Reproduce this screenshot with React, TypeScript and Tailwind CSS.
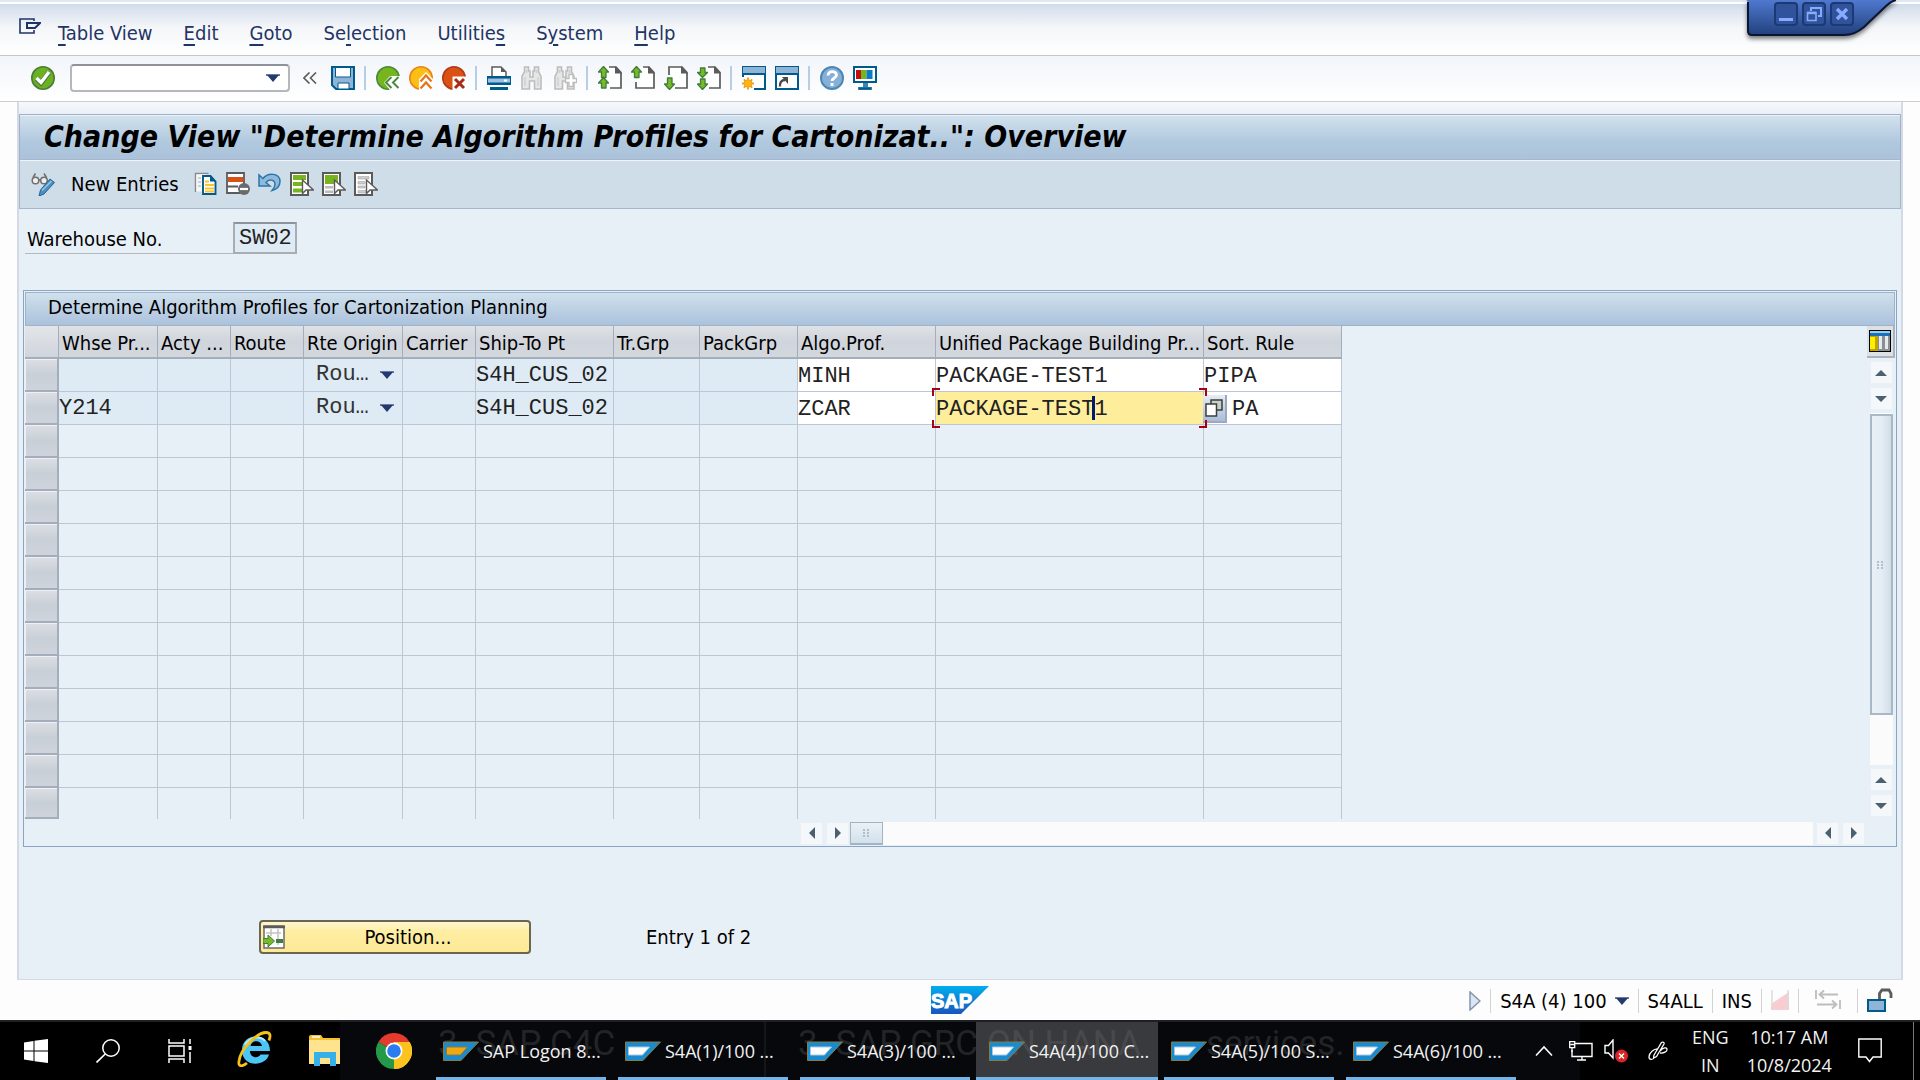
import React from "react";

const UI = "font-['DejaVu_Sans_Condensed','Noto_Sans',sans-serif]";
const MONO = "font-['Liberation_Mono',monospace]";

type IconProps = { children: React.ReactNode; className?: string; box?: string };
const Icon = ({ children, className = "size-6", box = "0 0 24 24" }: IconProps) => (
  <svg viewBox={box} className={`${className} block shrink-0`} fill="none" aria-hidden="true">
    {children}
  </svg>
);

const DownArrow = ({ className = "w-3.5 h-2" }: { className?: string }) => (
  <Icon className={className} box="0 0 14 8">
    <path d="M0 0h14v2H0z" fill="#6b7aa0" />
    <path d="M1 1h12L7 8z" fill="#233a6e" />
  </Icon>
);

/* ---------- toolbar icons ---------- */
const CheckIcon = () => (
  <Icon>
    <circle cx="12" cy="12" r="11.2" fill="#6bb122" stroke="#4a7c3c" strokeWidth="1.6" />
    <path d="M5.5 12.5l4.5 4.5L18 6.5" stroke="#4a7c3c" strokeWidth="5" />
    <path d="M5.5 12l4.5 4.5L18 6" stroke="#fff" strokeWidth="3.4" />
  </Icon>
);
const SaveIcon = () => (
  <Icon>
    <path d="M1 1h22v22H5l-4-4z" fill="#8fb4d8" stroke="#005b8c" strokeWidth="2" />
    <path d="M4.500 1.500h15V11h-15z" fill="#fff" stroke="#005b8c" />
    <path d="M7 17h11v6H7z" fill="#fff" stroke="#005b8c" />
  </Icon>
);
const BackIcon = () => (
  <Icon>
    <circle cx="12" cy="12" r="11.2" fill="#77b51f" stroke="#4b8a3a" strokeWidth="1.6" />
    <path d="M24 10H14l-6 6.500 6 7.500h10z" fill="#fff" />
    <path d="M15.500 11L10 16.500l5.500 5.500M22.500 11L17 16.500l5.500 5.500" stroke="#4b8a3a" strokeWidth="2" />
  </Icon>
);
const ExitIcon = () => (
  <Icon>
    <circle cx="12" cy="12" r="11.2" fill="#fdbf13" stroke="#e8851a" strokeWidth="1.6" />
    <path d="M10 24V13l7-7 7 7v11z" fill="#fff" />
    <path d="M11.500 15.500l5.500-6 5.500 6M11.500 22.500l5.500-6 5.500 6" stroke="#e8741a" strokeWidth="2.2" />
  </Icon>
);
const CancelIcon = () => (
  <Icon>
    <circle cx="12" cy="12" r="11.2" fill="#d95213" stroke="#b03a1a" strokeWidth="1.6" />
    <path d="M10.500 10.500h13.500V24H10.500z" fill="#fff" />
    <path d="M13 13l9 9M22 13l-9 9" stroke="#a92a17" strokeWidth="3" />
  </Icon>
);
const PrintIcon = () => (
  <Icon>
    <path d="M5 10V1h9l5 5v4" fill="#fff" stroke="#5b5b5b" strokeWidth="1.5" />
    <path d="M14 1v5h5z" fill="#5b5b5b" />
    <path d="M0 10h24v9H0z" fill="#005b8c" />
    <path d="M1 12.500h22v4H1z" fill="#9fc0e2" />
    <path d="M17 13.500h3v2h-3z" fill="#fff" />
    <path d="M3 21h18v3H3z" fill="#005b8c" />
  </Icon>
);
const FindIcon = ({ next = false }: { next?: boolean }) => (
  <Icon>
    <path
      d="M4.500 1h4v4h1.500v6h3V5h1.500V1h4v4.500l2.500 5V23h-6.500v-8h-5v8H2V10.500l2.500-5z"
      fill="#e6e6e6"
      stroke="#bdbdbd"
      strokeWidth="1.6"
    />
    <path d="M6.500 4v3M16.500 4v3M5 11v9M18 11v9" stroke="#cfcfcf" strokeWidth="1.5" />
    {next && (
      <path d="M16 8.500h4v4h3.500v4H20v4h-4v-4h-3.500v-4H16z" fill="#fff" stroke="#bdbdbd" strokeWidth="1.3" />
    )}
  </Icon>
);
const upArrow = "M5.500 .500l5 5.500H8v5.500H3.500V6H.5z";
const PageIcon = ({ kind }: { kind: "first" | "prev" | "next" | "last" }) => (
  <Icon>
    <path d="M6 1h11.500L23 6.500V22H6z" fill="#fff" />
    {kind === "first" || kind === "last" ? (
      <path d="M11 1h7l5 5.500V22H12" stroke="#5b5b5b" strokeWidth="1.7" />
    ) : kind === "prev" ? (
      <path d="M12 1h6l5 5.500V22H5v-6" stroke="#5b5b5b" strokeWidth="1.7" />
    ) : (
      <path d="M5 9V1h13l5 5.500V22H11" stroke="#5b5b5b" strokeWidth="1.7" />
    )}
    <path d="M17 0v7.500h7z" fill="#5b5b5b" />
    <g fill="#78b928" stroke="#3f7d3c" strokeWidth="1.3" strokeLinejoin="round">
      {kind === "first" && (
        <>
          <path d={upArrow} />
          <path d="M5.500 11.500l5 5.500H8v5H3.500v-5H.5z" />
        </>
      )}
      {kind === "prev" && <path d={upArrow} />}
      {kind === "next" && <path d="M5.500 23.500l5-5.500H8v-6H3.500v6H.5z" />}
      {kind === "last" && (
        <>
          <path d="M5.500 11.500l5-5H8V2H3.500v4.500H.5z" />
          <path d="M5.500 23.500l5-5.500H8v-5H3.500v5H.5z" />
        </>
      )}
    </g>
  </Icon>
);
const NewSessionIcon = () => (
  <Icon>
    <path d="M1 12V1h22v22H12" fill="#fff" stroke="#005b8c" strokeWidth="2" />
    <path d="M1 1h22v6H1z" fill="#8fb4d8" />
    <path d="M0 8h24" stroke="#005b8c" strokeWidth="2" />
    <path d="M0 11h11v13H0z" fill="#fff" />
    <circle cx="6" cy="17.500" r="3.800" fill="#fdb913" stroke="#f29a12" />
    <path
      d="M6 11.500v2M6 21.500v2M0 17.500h2M10 17.500h2M1.800 13.300l1.500 1.500M8.700 20.200l1.500 1.500M1.800 21.700l1.500-1.500M8.700 14.800l1.500-1.500"
      stroke="#f29a12"
      strokeWidth="1.8"
    />
  </Icon>
);
const ShortcutIcon = () => (
  <Icon>
    <path d="M1 1h22v22H1z" fill="#fff" stroke="#005b8c" strokeWidth="2" />
    <path d="M1 1h22v6H1z" fill="#8fb4d8" />
    <path d="M0 8h24" stroke="#005b8c" strokeWidth="2" />
    <path d="M5 20.500c-.5-4 1.500-6.500 5-6.500" stroke="#4a4a4a" strokeWidth="2.4" />
    <path d="M7 11h6v7z" fill="#4a4a4a" />
  </Icon>
);
const HelpIcon = () => (
  <Icon>
    <circle cx="12" cy="12" r="11" fill="#86b0d8" stroke="#4b86b5" strokeWidth="2" />
    <path d="M8 9.500C8 4.500 16.500 4.500 16.500 9c0 3-4.500 3-4.500 6" stroke="#fff" strokeWidth="2.8" />
    <path d="M10.500 17h3v3h-3z" fill="#fff" />
  </Icon>
);
const MonitorIcon = () => (
  <Icon>
    <path d="M1 1h22v15H1z" fill="#fff" stroke="#005b8c" strokeWidth="2" />
    <path d="M3 4h5v9H3z" fill="#c40d0d" />
    <path d="M8 4h5.500v9H8z" fill="#77b51f" />
    <path d="M13.500 4h6v9h-6z" fill="#0a7bc4" />
    <path d="M10 17h5v4h4v3H5v-3h5z" fill="#3f83b0" />
    <path d="M6 22.500h12" stroke="#005b8c" strokeWidth="2" />
  </Icon>
);

/* ---------- application bar icons ---------- */
const DisplayChangeIcon = () => (
  <Icon>
    <g stroke="#6f6f6f" strokeWidth="1.5">
      <circle cx="4.500" cy="8.500" r="3.300" fill="#eee" />
      <circle cx="13" cy="8.500" r="3.300" fill="#eee" />
      <path d="M7.500 8h2M2 5.500L4.500 1.500M15.500 5.500l-2.500-4" />
    </g>
    <path d="M8 24l1.500-6L19 7l4.500 3.500L13 22z" fill="#4c8fc0" stroke="#1f6798" />
    <path d="M11 18.500L20.500 9" stroke="#9fc6e4" strokeWidth="1.5" />
  </Icon>
);
const CopyIcon = () => (
  <Icon>
    <path d="M1.500 20V1.500h13" fill="#eef1f4" stroke="#8a8a8a" strokeWidth="1.4" />
    <path d="M2.500 2.500h10v17h-10z" fill="#f4f6f8" />
    <path d="M4 6h3M4 10h3M4 14h3" stroke="#aab" />
    <path d="M9 4h7.500l5 5.500V22H9z" fill="#fff" stroke="#005b8c" strokeWidth="1.9" />
    <path d="M16 3v6.500h6z" fill="#005b8c" />
    <path d="M11 9.500h4M11 13h9M11 16.500h9M11 19.500h9" stroke="#fbc42b" strokeWidth="2" />
  </Icon>
);
const DeleteRowIcon = () => (
  <Icon>
    <path d="M1 1h17v20H1z" fill="#fff" stroke="#5b5b5b" strokeWidth="1.8" />
    <path d="M2 5h15v5H2z" fill="#d95213" />
    <path d="M1 14.500h11" stroke="#5b5b5b" strokeWidth="2" />
    <circle cx="18" cy="17" r="6" fill="#6a6a6a" />
    <path d="M14 17h8" stroke="#fff" strokeWidth="2.2" />
  </Icon>
);
const UndoIcon = () => (
  <Icon>
    <path
      d="M1 3v11h11l-4-3.500c3-4 9-3 9 2 0 2.500-1.500 4-3 6 5-1.500 8-5 8-9C22 1 10 0 5 6.500z"
      fill="#8fb9dc"
      stroke="#2b76a9"
      strokeWidth="1.5"
    />
  </Icon>
);
const SelectIcon = ({ kind }: { kind: "all" | "block" | "none" }) => (
  <Icon>
    <path d="M1 1h17v22H1z" fill="#fff" stroke="#5b5b5b" strokeWidth="2" />
    {kind === "all" && <path d="M3 3h13v5H3zM3 10h10v4H3zM3 16.500h9v4H3z" fill="#77b51f" />}
    {kind === "block" && (
      <>
        <path d="M3 3h13v9H3z" fill="#77b51f" />
        <path d="M3 14h8v2.500H3zM3 18.500h8V21H3z" fill="#bbb" />
      </>
    )}
    {kind === "none" && (
      <path d="M4 4.500h11v2.500H4zM4 9.500h7v2.500H4zM4 14h7v2H4zM4 18.500h8V21H4z" fill="#ccc" stroke="#aaa" strokeWidth=".6" />
    )}
    <path d="M12.500 8v13.500l3.500-3.500h7.500z" fill="#fff" stroke="#5b5b5b" strokeWidth="1.4" />
  </Icon>
);

const Sep = () => <span className="h-6 w-[3px] border-l-2 border-[#b5cee6]" />;

const ToolButton = ({ label, children }: { label: string; children: React.ReactNode }) => (
  <button type="button" aria-label={label} title={label} className="shrink-0">
    {children}
  </button>
);

/* ---------- data ---------- */
const menu: [string, string, string][] = [
  ["", "T", "able View"],
  ["", "E", "dit"],
  ["", "G", "oto"],
  ["Se", "l", "ection"],
  ["Utilitie", "s", ""],
  ["S", "y", "stem"],
  ["", "H", "elp"],
];

const columns = [
  { title: "Whse Pr...", width: "w-[99px]" },
  { title: "Acty ...", width: "w-[73px]" },
  { title: "Route", width: "w-[73px]" },
  { title: "Rte Origin", width: "w-[99px]" },
  { title: "Carrier", width: "w-[73px]" },
  { title: "Ship-To Pt", width: "w-[138px]" },
  { title: "Tr.Grp", width: "w-[86px]" },
  { title: "PackGrp", width: "w-[98px]" },
  { title: "Algo.Prof.", width: "w-[138px]" },
  { title: "Unified Package Building Pr...", width: "w-[268px]" },
  { title: "Sort. Rule", width: "w-[138px]" },
];

const rows = [
  ["", "", "", "Rou…", "", "S4H_CUS_02", "", "", "MINH", "PACKAGE-TEST1", "PIPA"],
  ["Y214", "", "", "Rou…", "", "S4H_CUS_02", "", "", "ZCAR", "PACKAGE-TEST1", "PA"],
];
const emptyRows = Array.from({ length: 12 }, (_, i) => i);

const RowSelector = ({ n }: { n: number }) => (
  <td className="p-0">
    <button
      type="button"
      aria-label={`Select row ${n}`}
      className="block h-[33px] w-full border-r-2 border-b-2 border-[#a3adbb] bg-linear-to-b from-[#dcdfe4] via-[#c9cfd7] to-[#cfd4dc] shadow-[inset_1px_1px_0_#eef0f3] group-last:h-[31px]"
    />
  </td>
);

const Bracket = ({ className }: { className: string }) => (
  <span className={`pointer-events-none absolute z-10 size-2 border-[#a8000c] ${className}`} />
);

const Cell = ({ value, row, col }: { value: string; row: number; col: number }) => {
  const editable = col >= 8;
  const focused = row === 1 && col === 9;
  const bg = focused ? "bg-[#feee9c]" : editable ? "bg-white" : "bg-[#deebf5]";
  return (
    <td className={`relative border-r border-b border-[#bcc6d4] p-0 ${bg}`}>
      {col === 3 ? (
        <label className="flex items-center justify-between pr-2 pl-3">
          <select
            aria-label={`Route origin, row ${row + 1}`}
            className={`w-15 appearance-none bg-transparent text-[22px] leading-8 text-[#333] outline-none ${MONO}`}
          >
            <option>{value}</option>
          </select>
          <DownArrow />
        </label>
      ) : editable ? (
        <input
          type="text"
          aria-label={`${columns[col].title} row ${row + 1}`}
          defaultValue={value}
          className={`block h-8 w-full bg-transparent pt-0.5 text-[22px] text-[#222] outline-none ${row === 1 && col === 10 ? "pl-7" : ""} ${MONO}`}
        />
      ) : (
        <span className={`block h-8 pt-px text-[22px] leading-8 text-[#222] ${MONO}`}>{value}</span>
      )}
      {focused && (
        <>
          <Bracket className="-top-1 -left-1 border-t-2 border-l-2" />
          <Bracket className="-top-1 -right-1 border-t-2 border-r-2" />
          <Bracket className="-bottom-1 -left-1 border-b-2 border-l-2" />
          <Bracket className="-right-1 -bottom-1 border-r-2 border-b-2" />
          <span className="absolute top-1 left-[156px] h-6 w-[3px] bg-[#001a6e]" />
          <button
            type="button"
            aria-label="Possible entries"
            className="absolute top-[3px] left-full z-[5] flex h-7 w-6 items-center justify-center border-r-2 border-b-2 border-[#9aa9bf] bg-linear-to-b from-[#e6ecf4] to-[#a9bcd9]"
          >
            <Icon className="size-[18px]" box="0 0 18 18">
              <path d="M6 1h11v10H6z" fill="#c5d0cf" stroke="#3c4039" strokeWidth="1.5" />
              <path d="M1 5h10.500v12H1z" fill="#fff" stroke="#3c4039" strokeWidth="1.5" />
            </Icon>
          </button>
        </>
      )}
    </td>
  );
};

type Dir = "up" | "down" | "left" | "right";
const arrows: Record<Dir, string> = {
  up: "M0 9L6 3l6 6z",
  down: "M0 3l6 6 6-6z",
  left: "M9 0L3 6l6 6z",
  right: "M3 0l6 6-6 6z",
};
const ScrollButton = ({ dir }: { dir: Dir }) => (
  <button
    type="button"
    aria-label={`Scroll ${dir}`}
    className="flex size-[23px] shrink-0 items-center justify-center border border-[#eceff4] bg-[#f5f8fb]"
  >
    <Icon className="size-3" box="0 0 12 12">
      <path d={arrows[dir]} fill="#4d6070" />
    </Icon>
  </button>
);

const Grip = () => (
  <Icon className="size-2.5" box="0 0 10 10">
    <path d="M1 2h2M5 2h2M1 5h2M5 5h2M1 8h2M5 8h2" stroke="#9fb0c0" strokeWidth="1.4" />
  </Icon>
);

/* ---------- window frame ---------- */
const WindowControls = () => (
  <div className="absolute top-0 right-6 h-10 w-[150px]">
    <svg viewBox="0 0 150 40" className="absolute inset-0 drop-shadow-[0_3px_2px_rgba(0,0,0,0.5)]" aria-hidden="true">
      <defs>
        <linearGradient id="frame" x1="0" y1="0" x2="0" y2="1">
          <stop offset="0" stopColor="#4f79cf" />
          <stop offset="1" stopColor="#21407c" />
        </linearGradient>
      </defs>
      <path d="M0 0C2 1 2 2 2 4v27c0 3 1 4 4 4h92c8 0 13-2 20-8L140 6c4-4 6-5 10-6z" fill="url(#frame)" />
      <path d="M2 2v29c0 3 1 4 4 4h92c8 0 13-2 20-8L140 6c4-4 6-5 10-6" fill="none" stroke="#0b1430" strokeWidth="2" />
    </svg>
    <div className="absolute top-0.5 left-7 flex gap-1">
      {["Minimize", "Restore", "Close"].map((name) => (
        <button
          key={name}
          type="button"
          aria-label={name}
          className="flex size-6 items-center justify-center rounded-sm border-2 border-[#1c3973] bg-[#31539b]"
        >
          <Icon className="size-4" box="0 0 16 16">
            {name === "Minimize" && <path d="M1 12h14v3H1z" fill="#86abff" />}
            {name === "Restore" && (
              <g stroke="#86abff" strokeWidth="1.6">
                <path d="M5 5V2h10v8h-3" strokeWidth="2" />
                <path d="M1.500 6.500h8.500v8H1.500z" />
                <path d="M1.500 7h8.500" strokeWidth="2.4" />
              </g>
            )}
            {name === "Close" && <path d="M3 3l10 10M13 3L3 13" stroke="#86abff" strokeWidth="3.4" />}
          </Icon>
        </button>
      ))}
    </div>
  </div>
);

/* ---------- taskbar ---------- */
const tasks = ["SAP Logon 8...", "S4A(1)/100 ...", "S4A(3)/100 ...", "S4A(4)/100 C...", "S4A(5)/100 S...", "S4A(6)/100 ..."];

const SapTaskIcon = ({ gold }: { gold: boolean }) => (
  <Icon className="h-5 w-9" box="0 0 36 20">
    <path d="M.5 1h35L18 19.500H.5z" fill="#1b8bd0" stroke="#8a7a3c" />
    <path d="M3.500 6h21l-7 8h-14z" fill={gold ? "#f0a811" : "#fff"} stroke={gold ? "#8a7a3c" : "#a9c9e0"} />
  </Icon>
);

const Taskbar = () => (
  <footer className="relative flex h-[60px] shrink-0 items-stretch overflow-hidden border-t-2 border-[#1e2021] bg-black font-['Open_Sans',sans-serif] text-lg text-[#f2f2f2]">
    <div className="flex w-[340px] shrink-0 items-center pl-6">
      <button type="button" aria-label="Start" className="mr-12">
        <Icon>
          <path d="M0 3.500L9.500 2v9.500H0zM10.500 1.800L24 0v11.500H10.500zM0 12.500h9.500V22L0 20.500zM10.500 12.500H24V24l-13.500-1.800z" fill="#fff" />
        </Icon>
      </button>
      <button type="button" aria-label="Search" className="mr-12">
        <Icon>
          <circle cx="15" cy="9" r="8.200" stroke="#fff" strokeWidth="1.5" />
          <path d="M9.200 15L.5 23.500" stroke="#fff" strokeWidth="1.7" />
        </Icon>
      </button>
      <button type="button" aria-label="Task View" className="mr-[45px]">
        <Icon>
          <g stroke="#fff" strokeWidth="1.5">
            <path d="M1 0v4h15V0M1 24v-4h15v4M1 7h15v10H1zM22 0v5M22 13v11" />
          </g>
          <path d="M20.500 7h3v4h-3z" fill="#fff" />
        </Icon>
      </button>
      <button type="button" aria-label="Internet Explorer" className="mr-9 -mt-1">
        <Icon className="size-9" box="0 0 36 36">
          <path
            d="M33 20H13c0 7 8 8 10.500 3.500h8.500C29 36 5 37 5 19 5 1 33 0 33 20zM13.500 15h11.500c-1-6.500-10.500-6.500-11.500 0z"
            fill="#4cc6f4"
          />
          <path d="M8 14c4-8 15-10 20-4" stroke="#b8ecff" strokeWidth="2" />
          <path d="M10 32c-5 4-9 4-8-2C3.500 18 20 1.500 29 1.500c5 0 4.500 4 3 8" stroke="#f6c21a" strokeWidth="2.8" />
        </Icon>
      </button>
      <button type="button" aria-label="File Explorer">
        <Icon className="size-8" box="0 0 32 32">
          <path d="M0 2c0-1 .5-2 2-2h10l2 3h17v25H0z" fill="#f6c02c" />
          <path d="M0 5h32v24H0z" fill="#ffe38f" />
          <path d="M5 31V17h22v14h-6v-8H11v8z" fill="#35b0e8" />
          <path d="M3 2h8" stroke="#fff" strokeWidth="1.5" />
        </Icon>
      </button>
    </div>
    <div className="relative flex w-[1240px] shrink items-stretch bg-[#07080c]">
      <div aria-hidden="true" className="absolute inset-0 font-[Roboto,sans-serif] text-[35px] leading-10 whitespace-nowrap text-[#232426]">
        <span className="absolute top-0.5 left-[98px]">3. SAP C4C</span>
        <span className="absolute top-0 left-[424px] h-full w-0.5 bg-[#15161a]" />
        <span className="absolute top-0.5 left-[458px]">3. SAP GRC ON HANA</span>
        <span className="absolute top-0.5 left-[866px]">services.</span>
      </div>
      <button type="button" aria-label="Google Chrome" className="relative ml-9 shrink-0">
        <Icon className="size-9" box="0 0 36 36">
          <path d="M18 18L2.400 9A18 18 0 0133.600 9z" fill="#e33b2e" />
          <path d="M18 18L33.600 9A18 18 0 0118 36z" fill="#fcc31e" />
          <path d="M18 18v18A18 18 0 012.400 9z" fill="#249a48" />
          <path d="M18 18h7.800L18 36a18 18 0 0015.600-27H18z" fill="#fcc31e" />
          <circle cx="18" cy="18" r="8.500" fill="#fff" />
          <circle cx="18" cy="18" r="6.800" fill="#2a7cf0" />
        </Icon>
      </button>
      <div className="relative ml-[18px] flex">
        {tasks.map((t, i) => {
          const active = i === 3;
          return (
            <button
              key={t}
              type="button"
              className={`relative flex w-[182px] shrink-0 items-center pl-[13px] text-left whitespace-nowrap ${active ? "bg-[#77787a]/45" : ""}`}
            >
              <SapTaskIcon gold={i === 0} />
              <span className="ml-1">{t}</span>
              <span className={`absolute bottom-0 h-[3px] bg-[#71b5ea] ${active ? "inset-x-0" : "inset-x-1.5"}`} />
            </button>
          );
        })}
      </div>
      <button type="button" aria-label="Show hidden icons" className="relative ml-[13px] shrink-0">
        <Icon className="h-3 w-[18px]" box="0 0 18 12">
          <path d="M1 10.500L9 2l8 8.500" stroke="#fff" strokeWidth="1.6" />
        </Icon>
      </button>
      <button type="button" aria-label="Network" className="relative ml-4 shrink-0">
        <Icon className="h-5 w-6" box="0 0 24 20">
          <path d="M6 2.500h17v13H3V9M13 16v3M8 19h9" stroke="#fff" strokeWidth="1.4" />
          <path d="M.7.700h5v6h-5zM1.500 3.500h4M3 7v4" stroke="#fff" strokeWidth="1.3" />
        </Icon>
      </button>
    </div>
    <div className="flex grow items-center">
      <button type="button" aria-label="Volume muted" className="ml-6">
        <Icon className="size-6">
          <path d="M1 6.500h3.500L9 1v18l-4.500-5H1z" stroke="#fff" strokeWidth="1.4" />
          <circle cx="17.500" cy="17" r="6.500" fill="#dc2328" />
          <path d="M15 14.500l5 5M20 14.500l-5 5" stroke="#fff" strokeWidth="1.5" />
        </Icon>
      </button>
      <button type="button" aria-label="Windows Ink" className="ml-5">
        <Icon className="size-5" box="0 0 20 20">
          <path
            d="M6 14L13.500 1.500c1.500-1 3 0 2.500 1.500L8.500 15.500 5.500 17zM10 8c-4-.5-9 4-9 8 0 3 4 3.500 5.500 0M12 10c3-4 7-4 7-1.500 0 2-3 4-7 3.500"
            stroke="#fff"
            strokeWidth="1.3"
          />
        </Icon>
      </button>
      <div className="ml-6 text-center leading-7">
        <div>ENG</div>
        <div>IN</div>
      </div>
      <div className="ml-[18px] text-center leading-7 whitespace-nowrap">
        <div>10:17 AM</div>
        <div>10/8/2024</div>
      </div>
      <button type="button" aria-label="Notifications" className="mr-[31px] ml-auto">
        <Icon className="h-7 w-6" box="0 0 24 28">
          <path d="M.8 2h22.400v18H15l-3.500 4.500L8 20H.8z" stroke="#fff" strokeWidth="1.4" />
        </Icon>
      </button>
      <span className="mr-1.5 h-full w-px bg-[#77787a]" />
    </div>
  </footer>
);

const StatusSep = () => <span className="h-6 w-px bg-[#d3d3d3]" />;

export default function App() {
  return (
    <div className={`flex min-h-screen flex-col bg-[#fdfdfe] text-xl text-black ${UI}`}>
      <header className="relative border-b border-[#c3c9d0] bg-linear-to-b from-[#cbd8e8] via-[#f4f6f9] via-50% to-white">
        <div className="h-1 border-b-2 border-white bg-[#dfe8f4]" />
        <nav className="flex h-[51px] items-center gap-[31px] pt-1.5 pl-[19px] text-[#1f3565]">
          <button type="button" aria-label="System menu" className="-mt-3.5 -mr-3.5">
            <Icon className="h-4 w-[22px]" box="0 0 22 16">
              <path d="M15 3V1H1v14h14v-3" stroke="#1f3565" strokeWidth="1.6" />
              <path d="M8 5h13l-5 5H8z" stroke="#1f3565" strokeWidth="2" />
            </Icon>
          </button>
          {menu.map(([a, b, c]) => (
            <button key={a + b + c} type="button">
              {a}
              <span className="underline underline-offset-4">{b}</span>
              {c}
            </button>
          ))}
        </nav>
        <WindowControls />
      </header>

      <div className="flex h-[46px] items-center gap-[9px] border-b border-[#c9ced6] bg-linear-to-b from-[#f2f5fa] to-white pb-0.5 pl-[31px]">
        <ToolButton label="Enter"><CheckIcon /></ToolButton>
        <label className="relative ml-1.5 flex h-7 w-[220px] items-center rounded-sm border-2 border-[#b4b8bc] border-t-[#8f9399] bg-white">
          <input type="text" aria-label="Command field" className="h-full w-full bg-transparent px-1 outline-none" />
          <DownArrow className="mr-2 h-2 w-3.5 shrink-0" />
        </label>
        <button type="button" aria-label="Collapse command field" className="mr-[5px] ml-1">
          <Icon className="h-3 w-3.5" box="0 0 14 12">
            <path d="M6.500.500L1 6l5.500 5.500M13 .500L7.500 6l5.500 5.500" stroke="#5b5b5b" strokeWidth="1.6" />
          </Icon>
        </button>
        <ToolButton label="Save"><SaveIcon /></ToolButton>
        <Sep />
        <ToolButton label="Back"><BackIcon /></ToolButton>
        <ToolButton label="Exit"><ExitIcon /></ToolButton>
        <ToolButton label="Cancel"><CancelIcon /></ToolButton>
        <Sep />
        <ToolButton label="Print"><PrintIcon /></ToolButton>
        <ToolButton label="Find"><FindIcon /></ToolButton>
        <ToolButton label="Find next"><FindIcon next /></ToolButton>
        <Sep />
        <ToolButton label="First page"><PageIcon kind="first" /></ToolButton>
        <ToolButton label="Previous page"><PageIcon kind="prev" /></ToolButton>
        <ToolButton label="Next page"><PageIcon kind="next" /></ToolButton>
        <ToolButton label="Last page"><PageIcon kind="last" /></ToolButton>
        <Sep />
        <ToolButton label="New session"><NewSessionIcon /></ToolButton>
        <ToolButton label="Create shortcut"><ShortcutIcon /></ToolButton>
        <Sep />
        <ToolButton label="Help"><HelpIcon /></ToolButton>
        <ToolButton label="Customize layout"><MonitorIcon /></ToolButton>
      </div>

      <main className="mx-[17px] flex grow flex-col border-x-2 border-b border-[#d3d9e5] bg-[#e8f0f7]">
        <div className="h-3 bg-linear-to-b from-[#f7f9fb] to-[#e9eff6]" />
        <h1 className="flex h-[46px] items-center border border-[#9fb2c9] border-b-[#a5b7cc] bg-linear-to-b from-[#d3e2ee] via-[#b1c9de] via-60% to-[#abc2da] pl-6 text-[30px] font-bold whitespace-nowrap italic shadow-[inset_0_1px_0_#e9f1f8]">
          Change View "Determine Algorithm Profiles for Cartonizat..": Overview
        </h1>
        <div className="flex h-[49px] items-center gap-2 border border-t-0 border-[#a5b7cc] bg-[#cfdde8] pl-[11px] shadow-[inset_0_1px_0_#eef4f9]">
          <ToolButton label="Display / Change"><DisplayChangeIcon /></ToolButton>
          <button type="button" className="mr-[7px] ml-2">New Entries</button>
          <ToolButton label="Copy as"><CopyIcon /></ToolButton>
          <ToolButton label="Delete"><DeleteRowIcon /></ToolButton>
          <ToolButton label="Undo change"><UndoIcon /></ToolButton>
          <ToolButton label="Select all"><SelectIcon kind="all" /></ToolButton>
          <ToolButton label="Select block"><SelectIcon kind="block" /></ToolButton>
          <ToolButton label="Deselect all"><SelectIcon kind="none" /></ToolButton>
        </div>

        <div className="mt-[13px] ml-1.5 flex h-8 items-stretch">
          <label htmlFor="warehouse" className="w-52 border-b border-[#b3b8bd] pl-0.5 leading-[34px]">
            Warehouse No.
          </label>
          <input
            id="warehouse"
            type="text"
            readOnly
            defaultValue="SW02"
            className={`w-16 border-2 border-[#a9adb2] border-t-[#8f9399] bg-[#deebf5] pt-0.5 pl-1 text-[22px] text-[#222] outline-none ${MONO}`}
          />
        </div>

        <section className="mx-1 mt-9 border border-[#8aa5c4] p-px">
          <h2 className="flex h-[34px] items-center border border-[#9db3cb] bg-linear-to-b from-[#d0e0ec] to-[#abc2dc] pb-1 pl-[22px] text-xl">
            Determine Algorithm Profiles for Cartonization Planning
          </h2>
          <div className="flex">
            <div className="min-w-0 grow overflow-hidden">
              <table className="w-[1317px] table-fixed border-separate border-spacing-0">
                <thead>
                  <tr className="h-[33px]">
                    <th aria-label="Row selector" className="w-[34px] border-r border-b-2 border-[#a3adbb] bg-linear-to-b from-[#e3e5e8] to-[#d0d4dc]" />
                    {columns.map((c) => (
                      <th
                        key={c.title}
                        scope="col"
                        className={`${c.width} border-r border-b-2 border-[#a3adbb] bg-linear-to-b from-[#dfe3e5] via-[#d0d4dc] to-[#d3d8dd] p-0 pt-0.5 pl-[3px] text-left font-normal whitespace-nowrap`}
                      >
                        {c.title}
                      </th>
                    ))}
                  </tr>
                </thead>
                <tbody>
                  {rows.map((r, i) => (
                    <tr key={i} className="h-[33px]">
                      <RowSelector n={i + 1} />
                      {r.map((v, j) => (
                        <Cell key={j} value={v} row={i} col={j} />
                      ))}
                    </tr>
                  ))}
                  {emptyRows.map((n) => (
                    <tr key={n} className="group h-[33px] last:h-[31px]">
                      <RowSelector n={n + 3} />
                      {columns.map((c) => (
                        <td key={c.title} className="border-r border-b border-[#bcc6d4] p-0 group-last:border-b-0" />
                      ))}
                    </tr>
                  ))}
                </tbody>
              </table>
              <div className="mt-0.5 mr-0.5 ml-[775px] flex h-6 items-center gap-[3px]">
                <ScrollButton dir="left" />
                <ScrollButton dir="right" />
                <div className="-ml-0.5 flex h-[23px] grow bg-[#fbfbfb]">
                  <div className="flex w-[33px] items-center justify-center border border-b-2 border-[#a3b3c2] bg-linear-to-b from-[#e9f1f7] to-[#d3e1ec]">
                    <Grip />
                  </div>
                </div>
                <ScrollButton dir="left" />
                <ScrollButton dir="right" />
              </div>
            </div>
            <div className="flex w-7 shrink-0 flex-col items-center gap-[3px] pb-7">
              <button type="button" aria-label="Table settings" className="flex h-8 w-full items-center justify-center border-r-2 border-b-2 border-[#a8b3bf] bg-[#dde1e4]">
                <Icon className="h-[22px] w-[22px]" box="0 0 22 22">
                  <path d="M0 0h22v22H0z" fill="#000" />
                  <path d="M1 1h20v5H1z" fill="#1d6fb8" />
                  <path d="M1 1h20v2H1z" fill="#8fd0f5" />
                  <path d="M1 6h8v15H1z" fill="#b9a600" />
                  <path d="M1 7h5v12H1z" fill="#ffee00" />
                  <path d="M9 6h6v15H9zM15 6h6v15h-6z" fill="#8a8f96" />
                  <path d="M10 6h3v13h-3zM16 6h3v13h-3z" fill="#e8ebee" />
                </Icon>
              </button>
              <ScrollButton dir="up" />
              <ScrollButton dir="down" />
              <div className="flex w-[23px] grow flex-col bg-[#fbfbfc] pt-px">
                <div className="flex h-[301px] items-center justify-center border-2 border-[#a9b8c6] bg-linear-to-r from-[#e9f1f7] via-[#e4ecf4] to-[#d0deea]">
                  <Grip />
                </div>
              </div>
              <ScrollButton dir="up" />
              <ScrollButton dir="down" />
            </div>
          </div>
        </section>

        <div className="mt-[73px] ml-60 flex items-center">
          <button
            type="button"
            className="flex h-[34px] w-[272px] items-center rounded-sm border-2 border-[#6a6650] bg-linear-to-b from-[#fff6cf] via-[#feeea3] via-30% to-[#fde995] pl-0.5"
          >
            <Icon className="size-6">
              <path d="M1 1h20v22H1z" fill="#fff" stroke="#6b6b6b" strokeWidth="1.5" />
              <path d="M0 2h22" stroke="#5b5b5b" strokeWidth="2.5" />
              <path d="M3 8h15M8 4v7M15 4v16" stroke="#c3c3c3" strokeWidth="1.5" />
              <path d="M13 14h7v4h-7z" fill="#3f7d3c" />
              <path d="M0 13.500h5V10l6.500 6L5 22v-3.500H0z" fill="#78b928" stroke="#3f7d3c" />
            </Icon>
            <span className="grow text-center">Position...</span>
          </button>
          <span className="ml-[115px]">Entry 1 of 2</span>
        </div>
      </main>

      <div className="grid h-10 shrink-0 grid-cols-[1fr_auto_1fr] items-center">
        <span />
        <svg viewBox="0 0 58 28" className="block h-7 w-[58px]" role="img" aria-label="SAP">
          <defs>
            <linearGradient id="sap" x1="0" y1="0" x2="0" y2="1">
              <stop offset="0" stopColor="#00aeef" />
              <stop offset="1" stopColor="#1a55bf" />
            </linearGradient>
          </defs>
          <path d="M0 0h58L30 28H0z" fill="url(#sap)" />
          <text x="0" y="22" fontFamily="Liberation Sans, sans-serif" fontWeight="700" fontSize="20" fill="#fff" stroke="#fff" strokeWidth="1">
            SAP
          </text>
        </svg>
        <div className="flex items-center gap-[9px] justify-self-end pt-0.5 pr-[27px]">
          <button type="button" aria-label="Expand status bar">
            <Icon className="h-5 w-3" box="0 0 12 20">
              <path d="M1 1v18l10-9z" fill="#dbe6f2" stroke="#8295ad" strokeWidth="1.5" />
            </Icon>
          </button>
          <StatusSep />
          <button type="button" className="flex items-center gap-2 whitespace-nowrap">
            S4A (4) 100 <DownArrow />
          </button>
          <StatusSep />
          <span>S4ALL</span>
          <StatusSep />
          <span>INS</span>
          <StatusSep />
          <Icon className="mb-1 h-6 w-[18px]" box="0 0 18 24">
            <path d="M0 17L18 5v18H0z" fill="#f8cdd2" />
            <path d="M1 3v20M17 3v20" stroke="#dcdcdc" strokeWidth="1.5" />
          </Icon>
          <StatusSep />
          <Icon className="mx-1.5 mb-1 h-6 w-7" box="0 0 28 24">
            <path d="M2 3v9M5 7.500h19M10 3.500L5.500 7.500l4.500 4M26 13v9M3 17.500h19M18 13.500l4.500 4-4.500 4" stroke="#bdbdbd" strokeWidth="1.8" />
          </Icon>
          <StatusSep />
          <Icon className="mb-0.5 h-6 w-[26px]" box="0 0 26 24">
            <path d="M1 12h17v11H1z" fill="#8fb4d8" stroke="#005b8c" strokeWidth="2" />
            <path d="M12.500 11V5.500L15 2h7l2 3.500V10" stroke="#5b5b5b" strokeWidth="2.8" />
          </Icon>
        </div>
      </div>

      <Taskbar />
    </div>
  );
}
